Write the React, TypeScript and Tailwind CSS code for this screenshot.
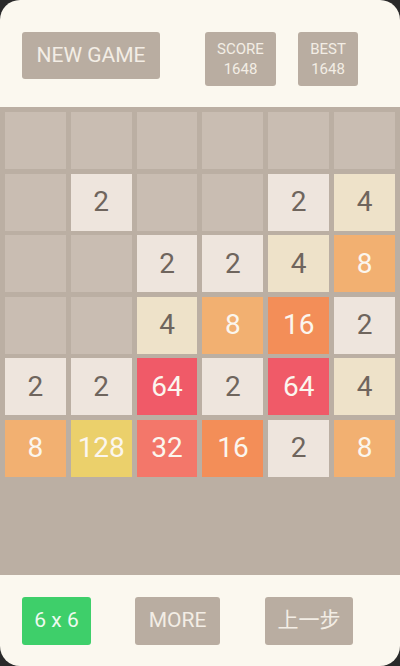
const board: number[][] = [
  [0, 0, 0, 0, 0, 0],
  [0, 2, 0, 0, 2, 4],
  [0, 0, 2, 2, 4, 8],
  [0, 0, 4, 8, 16, 2],
  [2, 2, 64, 2, 64, 4],
  [8, 128, 32, 16, 2, 8],
]

const tileClass: Record<number, string> = {
  0: 'bg-[#c9bdb2]',
  2: 'bg-[#eee5dd] text-[#6f655d]',
  4: 'bg-[#eee2c9] text-[#6f655d]',
  8: 'bg-[#f2b071] text-[#fbf6ee]',
  16: 'bg-[#f38e58] text-[#fbf6ee]',
  32: 'bg-[#f3776a] text-[#fbf6ee]',
  64: 'bg-[#f05a68] text-[#fbf6ee]',
  128: 'bg-[#ebd06b] text-[#fbf6ee]',
}

function Tile({ value }: { value: number }) {
  return (
    <div
      className={`flex h-[57px] items-center justify-center text-[28px] ${tileClass[value]}`}
    >
      {value > 0 ? value : null}
    </div>
  )
}

export default function App() {
  return (
    <div className="h-[666px] w-[400px] bg-[#2a2a2a]" style={{ fontFamily: 'Roboto, "Noto Sans CJK SC", sans-serif' }}>
      <div className="flex h-full flex-col overflow-hidden rounded-[20px] bg-[#fbf8ef]">
        <div className="flex h-[107px] items-start pt-8">
          <button className="ml-[22px] flex h-[47px] w-[138px] items-center justify-center rounded-[3px] bg-[#b9ada1] text-[21px] text-[#f3ede5]">
            NEW GAME
          </button>
          <div className="ml-[45px] flex h-[54px] w-[71px] flex-col items-center justify-center rounded-[3px] bg-[#b9ada1] text-[15px] leading-[20px] text-[#f3ede5]">
            <span>SCORE</span>
            <span>1648</span>
          </div>
          <div className="ml-[22px] flex h-[54px] w-[60px] flex-col items-center justify-center rounded-[3px] bg-[#b9ada1] text-[15px] leading-[20px] text-[#f3ede5]">
            <span>BEST</span>
            <span>1648</span>
          </div>
        </div>
        <div className="h-[468px] bg-[#bbafa3] px-[5px] pt-[5px]">
          <div className="grid grid-cols-6 gap-x-[5px] gap-y-[4.6px]">
            {board.flat().map((v, i) => (
              <Tile key={i} value={v} />
            ))}
          </div>
        </div>
        <div className="flex flex-1 items-start pt-[22px]">
          <button className="ml-[22px] flex h-[48px] w-[69px] items-center justify-center rounded-[3px] bg-[#3ecf6a] text-[21px] text-[#eefaf0]">
            6 x 6
          </button>
          <button className="ml-[44px] flex h-[48px] w-[85px] items-center justify-center rounded-[3px] bg-[#b9ada1] text-[21px] text-[#f3ede5]">
            MORE
          </button>
          <button className="ml-[45px] flex h-[48px] w-[88px] items-center justify-center rounded-[3px] bg-[#b9ada1] text-[21px] text-[#f3ede5]">
            上一步
          </button>
        </div>
      </div>
    </div>
  )
}
